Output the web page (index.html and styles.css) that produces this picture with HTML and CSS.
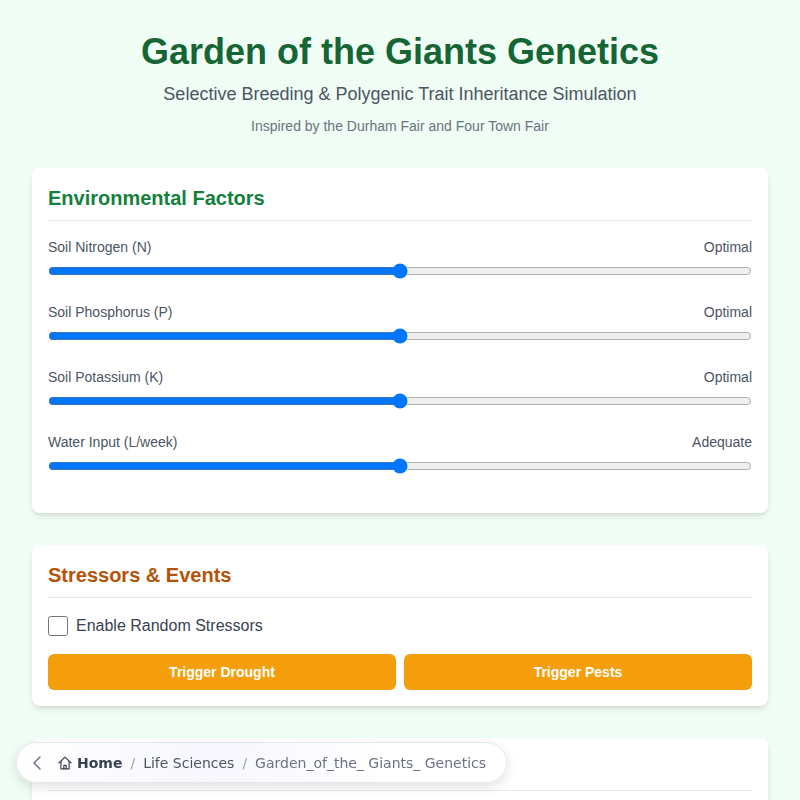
FILE: index.html
```html
<!DOCTYPE html>
<html lang="en">
<head>
    <meta charset="UTF-8">
    <meta name="viewport" content="width=device-width, initial-scale=1.0">
    <title>Garden of the Giants Genetics</title>
    <link rel="stylesheet" href="styles.css">
</head>
<body>
    <nav class="crumbs">
        <svg class="back" width="24" height="24" viewBox="0 0 24 24" fill="none" stroke="currentColor" stroke-width="1.5" stroke-linecap="round" stroke-linejoin="round"><path d="M15 18l-6-6 6-6"/></svg>
        <svg class="home" width="14" height="14" viewBox="0 0 24 24" fill="none" stroke="currentColor" stroke-width="2" stroke-linecap="round" stroke-linejoin="round"><path d="M1.5 12L12 2l10.5 10"/><path d="M5 9v13h14V9"/><path d="M10 22v-6h4v6"/></svg>
        <span class="crumb-home">Home</span>
        <span class="sep">/</span>
        <span class="crumb-link">Life Sciences</span>
        <span class="sep">/</span>
        <span class="crumb-current">Garden_of_the_ Giants_ Genetics</span>
    </nav>

    <div class="page">
        <header class="top">
            <h1>Garden of the Giants Genetics</h1>
            <p class="subtitle">Selective Breeding &amp; Polygenic Trait Inheritance Simulation</p>
            <p class="credit">Inspired by the Durham Fair and Four Town Fair</p>
        </header>

        <section class="card">
            <h2 class="green">Environmental Factors</h2>
            <div class="slider">
                <div class="slider-label"><span>Soil Nitrogen (N)</span><span>Optimal</span></div>
                <input type="range" min="0" max="100" value="50">
            </div>
            <div class="slider">
                <div class="slider-label"><span>Soil Phosphorus (P)</span><span>Optimal</span></div>
                <input type="range" min="0" max="100" value="50">
            </div>
            <div class="slider">
                <div class="slider-label"><span>Soil Potassium (K)</span><span>Optimal</span></div>
                <input type="range" min="0" max="100" value="50">
            </div>
            <div class="slider">
                <div class="slider-label"><span>Water Input (L/week)</span><span>Adequate</span></div>
                <input type="range" min="0" max="100" value="50">
            </div>
        </section>

        <section class="card">
            <h2 class="orange">Stressors &amp; Events</h2>
            <label class="check"><input type="checkbox"><span>Enable Random Stressors</span></label>
            <div class="buttons">
                <button type="button">Trigger Drought</button>
                <button type="button">Trigger Pests</button>
            </div>
        </section>

        <section class="card">
            <h2 class="green">Breeding</h2>
        </section>
    </div>
</body>
</html>
```

FILE: styles.css
```css
* {
    box-sizing: border-box;
}
body {
    margin: 0;
    background: #f0fdf4;
    color: #1f2937;
    font-family: "Liberation Sans", Arial, sans-serif;
}
.page {
    padding: 32px;
}
.top {
    text-align: center;
    margin-bottom: 32px;
}
h1 {
    margin: 0 0 8px;
    font-size: 36px;
    line-height: 40px;
    font-weight: 700;
    color: #166534;
}
.subtitle {
    margin: 0 0 8px;
    font-size: 18px;
    line-height: 28px;
    color: #4b5563;
}
.credit {
    margin: 0;
    font-size: 14px;
    line-height: 20px;
    color: #6b7280;
}
.card {
    background: #fff;
    border-radius: 8px;
    padding: 16px;
    margin-bottom: 32px;
    box-shadow: 0 4px 6px -1px rgba(0, 0, 0, 0.1), 0 2px 4px -2px rgba(0, 0, 0, 0.1);
}
h2 {
    margin: 0 0 16px;
    padding-bottom: 8px;
    font-size: 20px;
    line-height: 28px;
    font-weight: 600;
    border-bottom: 1px solid #e5e7eb;
}
.green {
    color: #15803d;
}
.orange {
    color: #b45309;
}
.slider {
    margin-bottom: 23px;
}
.slider-label {
    display: flex;
    justify-content: space-between;
    font-size: 14px;
    line-height: 20px;
    color: #4b5563;
    margin-bottom: 6px;
}
.slider input {
    display: block;
    width: 100%;
    height: 16px;
    margin: 0;
}
.check {
    display: flex;
    align-items: center;
    gap: 8px;
    font-size: 16px;
    line-height: 24px;
    color: #374151;
    margin-bottom: 16px;
}
.check input {
    width: 20px;
    height: 20px;
    margin: 0;
}
.buttons {
    display: grid;
    grid-template-columns: 1fr 1fr;
    gap: 8px;
}
button {
    height: 36px;
    border: 0;
    border-radius: 6px;
    background: #f59e0b;
    color: #fff;
    font-family: inherit;
    font-size: 14px;
    font-weight: 700;
}
.crumbs {
    position: fixed;
    left: 16px;
    bottom: 17px;
    z-index: 10;
    width: 491px;
    height: 41px;
    display: flex;
    align-items: center;
    padding: 0 0 0 8px;
    white-space: nowrap;
    background: linear-gradient(100deg, #fff 0%, #f6f7fd 40%, #fff 75%);
    border: 1px solid #e5e7eb;
    border-radius: 21px;
    box-shadow: 0 4px 12px rgba(0, 0, 0, 0.12);
    font-family: "DejaVu Sans", sans-serif;
    font-size: 14px;
    color: #4b5563;
}
.back {
    color: #6b7280;
    margin-right: 9px;
}
.home {
    color: #374151;
    margin-right: 5px;
}
.crumb-home {
    font-weight: 700;
    color: #374151;
}
.crumb-link {
    color: #4b5563;
}
.crumb-current {
    color: #6b7280;
}
.sep {
    margin: 0 8px;
    color: #9ca3af;
}
```
